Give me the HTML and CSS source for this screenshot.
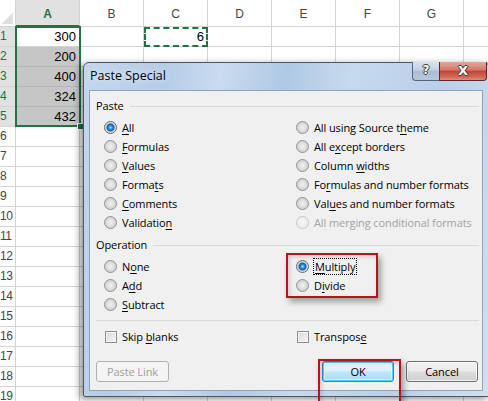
FILE: index.html
```html
<!DOCTYPE html>
<html>
<head>
<meta charset="utf-8">
<link rel="stylesheet" href="styles.css">
</head>
<body>
<div class="sheet">
  <div class="row hdr"><div class="corner"></div><div class="ch sel-h">A</div><div class="ch">B</div><div class="ch">C</div><div class="ch">D</div><div class="ch">E</div><div class="ch">F</div><div class="ch">G</div><div class="ch last"></div></div>
  <div class="row"><div class="rh on">1</div><div class="c num">300</div><div class="c"></div><div class="c num copy">6</div><div class="c"></div><div class="c"></div><div class="c"></div><div class="c"></div><div class="c last"></div></div>
  <div class="row"><div class="rh on">2</div><div class="c num shade">200</div><div class="c"></div><div class="c"></div><div class="c"></div><div class="c"></div><div class="c"></div><div class="c"></div><div class="c last"></div></div>
  <div class="row"><div class="rh on">3</div><div class="c num shade">400</div><div class="c"></div><div class="c"></div><div class="c"></div><div class="c"></div><div class="c"></div><div class="c"></div><div class="c last"></div></div>
  <div class="row"><div class="rh on">4</div><div class="c num shade">324</div><div class="c"></div><div class="c"></div><div class="c"></div><div class="c"></div><div class="c"></div><div class="c"></div><div class="c last"></div></div>
  <div class="row"><div class="rh on">5</div><div class="c num shade">432</div><div class="c"></div><div class="c"></div><div class="c"></div><div class="c"></div><div class="c"></div><div class="c"></div><div class="c last"></div></div>
  <div class="row"><div class="rh">6</div><div class="c"></div><div class="c"></div><div class="c"></div><div class="c"></div><div class="c"></div><div class="c"></div><div class="c"></div><div class="c last"></div></div>
  <div class="row"><div class="rh">7</div><div class="c"></div><div class="c"></div><div class="c"></div><div class="c"></div><div class="c"></div><div class="c"></div><div class="c"></div><div class="c last"></div></div>
  <div class="row"><div class="rh">8</div><div class="c"></div><div class="c"></div><div class="c"></div><div class="c"></div><div class="c"></div><div class="c"></div><div class="c"></div><div class="c last"></div></div>
  <div class="row"><div class="rh">9</div><div class="c"></div><div class="c"></div><div class="c"></div><div class="c"></div><div class="c"></div><div class="c"></div><div class="c"></div><div class="c last"></div></div>
  <div class="row"><div class="rh">10</div><div class="c"></div><div class="c"></div><div class="c"></div><div class="c"></div><div class="c"></div><div class="c"></div><div class="c"></div><div class="c last"></div></div>
  <div class="row"><div class="rh">11</div><div class="c"></div><div class="c"></div><div class="c"></div><div class="c"></div><div class="c"></div><div class="c"></div><div class="c"></div><div class="c last"></div></div>
  <div class="row"><div class="rh">12</div><div class="c"></div><div class="c"></div><div class="c"></div><div class="c"></div><div class="c"></div><div class="c"></div><div class="c"></div><div class="c last"></div></div>
  <div class="row"><div class="rh">13</div><div class="c"></div><div class="c"></div><div class="c"></div><div class="c"></div><div class="c"></div><div class="c"></div><div class="c"></div><div class="c last"></div></div>
  <div class="row"><div class="rh">14</div><div class="c"></div><div class="c"></div><div class="c"></div><div class="c"></div><div class="c"></div><div class="c"></div><div class="c"></div><div class="c last"></div></div>
  <div class="row"><div class="rh">15</div><div class="c"></div><div class="c"></div><div class="c"></div><div class="c"></div><div class="c"></div><div class="c"></div><div class="c"></div><div class="c last"></div></div>
  <div class="row"><div class="rh">16</div><div class="c"></div><div class="c"></div><div class="c"></div><div class="c"></div><div class="c"></div><div class="c"></div><div class="c"></div><div class="c last"></div></div>
  <div class="row"><div class="rh">17</div><div class="c"></div><div class="c"></div><div class="c"></div><div class="c"></div><div class="c"></div><div class="c"></div><div class="c"></div><div class="c last"></div></div>
  <div class="row"><div class="rh">18</div><div class="c"></div><div class="c"></div><div class="c"></div><div class="c"></div><div class="c"></div><div class="c"></div><div class="c"></div><div class="c last"></div></div>
  <div class="row"><div class="rh">19</div><div class="c"></div><div class="c"></div><div class="c"></div><div class="c"></div><div class="c"></div><div class="c"></div><div class="c"></div><div class="c last"></div></div>
</div>
<div class="selection"><div class="handle"></div></div>

<div class="dialog">
  <div class="titlebar">
    <div class="title">Paste Special</div>
    <div class="caption-btns">
      <div class="cbtn help">?</div>
      <div class="cbtn close">X</div>
    </div>
  </div>
  <div class="content">
    <div class="group-label">Paste</div>
    <div class="options paste-opts">
      <div class="opt"><span class="radio on"></span><span><u>A</u>ll</span></div>
      <div class="opt"><span class="radio"></span><span>All using Source t<u>h</u>eme</span></div>
      <div class="opt"><span class="radio"></span><span><u>F</u>ormulas</span></div>
      <div class="opt"><span class="radio"></span><span>All e<u>x</u>cept borders</span></div>
      <div class="opt"><span class="radio"></span><span><u>V</u>alues</span></div>
      <div class="opt"><span class="radio"></span><span>Column <u>w</u>idths</span></div>
      <div class="opt"><span class="radio"></span><span>Forma<u>t</u>s</span></div>
      <div class="opt"><span class="radio"></span><span>Fo<u>r</u>mulas and number formats</span></div>
      <div class="opt"><span class="radio"></span><span><u>C</u>omments</span></div>
      <div class="opt"><span class="radio"></span><span>Val<u>u</u>es and number formats</span></div>
      <div class="opt"><span class="radio"></span><span>Validatio<u>n</u></span></div>
      <div class="opt disabled"><span class="radio"></span><span>All merging conditional formats</span></div>
    </div>
    <div class="group-label op-label">Operation</div>
    <div class="options op-opts">
      <div class="opt"><span class="radio"></span><span>N<u>o</u>ne</span></div>
      <div class="opt"><span class="radio on"></span><span class="focus"><u>M</u>ultiply</span></div>
      <div class="opt"><span class="radio"></span><span>A<u>d</u>d</span></div>
      <div class="opt"><span class="radio"></span><span>D<u>i</u>vide</span></div>
      <div class="opt"><span class="radio"></span><span><u>S</u>ubtract</span></div>
    </div>
    <div class="separator"></div>
    <div class="options checks">
      <div class="opt"><span class="check"></span><span>Skip <u>b</u>lanks</span></div>
      <div class="opt"><span class="check"></span><span>Transpos<u>e</u></span></div>
    </div>
    <div class="buttons">
      <div class="btn disabled-btn">Paste Link</div>
      <div class="btn default">OK</div>
      <div class="btn">Cancel</div>
    </div>
  </div>
</div>

<div class="mark mark-op"></div>
<div class="mark mark-ok"></div>
</body>
</html>
```

FILE: styles.css
```css
* { box-sizing: border-box; }
body {
  margin: 0;
  width: 488px;
  height: 401px;
  overflow: hidden;
  position: relative;
  background: #fff;
  font-family: "Liberation Sans", Arial, sans-serif;
}

/* ---------- spreadsheet ---------- */
.sheet { display: flex; flex-direction: column; }
.row { display: flex; height: 20px; }
.row.hdr { height: 27px; }
.row > div {
  border-right: 1px solid #d4d4d4;
  border-bottom: 1px solid #d4d4d4;
  flex: none;
}
.corner, .rh { width: 16px; }
.ch, .c { width: 64px; }
.row > .last { flex: 1; border-right: none; }

.corner { position: relative; background: #fff; }
.corner::after {
  content: "";
  position: absolute;
  right: 2px; bottom: 2px;
  width: 11px; height: 11px;
  background: linear-gradient(135deg, transparent 50%, #dfdfdf 50%);
}
.ch {
  background: #fff;
  color: #444;
  font-size: 12px;
  text-align: center;
  line-height: 23px;
  padding-top: 3px;
}
.ch.sel-h {
  background: #e1e1e1;
  color: #217346;
  font-weight: bold;
  border-bottom: 2px solid #217346;
  line-height: 22px;
}
.rh {
  color: #444;
  font-size: 12px;
  line-height: 19px;
  padding-left: 0;
  white-space: nowrap;
  letter-spacing: -0.5px;
}
.rh.on { background: #e1e1e1; color: #217346; }

.c { font-size: 13px; line-height: 19px; color: #000; }
.c.num { text-align: right; padding-right: 3px; }
.c.shade { background: #c6c6c6; border-bottom-color: #b5b5b5; }
.c.copy { position: relative; }
.c.copy::after {
  content: "";
  position: absolute;
  left: 0; top: 0; right: -1px; bottom: -1px;
  border: 2px dashed #217346;
}

.selection {
  position: absolute;
  left: 15px; top: 26px;
  width: 66px; height: 101px;
  border: 2px solid #217346;
}
.handle {
  position: absolute;
  right: -5px; bottom: -5px;
  width: 7px; height: 7px;
  background: #217346;
  border: 1px solid #fff;
}

/* ---------- dialog ---------- */
.dialog {
  position: absolute;
  left: 83px; top: 62px;
  width: 407px; height: 335px;
  border: 1px solid #4f5864;
  border-radius: 6px 6px 2px 2px;
  background: linear-gradient(100deg, #c3d7ed 0%, #b6cde7 18%, #c9dcf0 30%, #afc8e3 44%, #c6daee 58%, #b9d0e9 78%, #cfe0f2 100%);
  box-shadow: -3px 2px 7px rgba(0,0,0,.45);
  display: flex;
  flex-direction: column;
  font-family: "Open Sans", "Noto Sans", sans-serif;
  font-size: 11px;
  letter-spacing: -0.1px;
  color: #000;
}
.titlebar {
  height: 27px;
  display: flex;
  align-items: flex-start;
}
.title {
  flex: 1;
  padding: 5px 0 0 6px;
  font-size: 12.5px;
  letter-spacing: 0;
  line-height: 16px;
  color: #000;
  text-shadow: 0 0 6px rgba(255,255,255,.9);
}
.caption-btns {
  display: flex;
  margin-top: -1px;
  margin-right: 2px;
}
.cbtn {
  height: 19px;
  border: 1px solid #56657a;
  border-top: none;
  color: #fff;
  font-family: "DejaVu Sans", sans-serif;
  font-weight: bold;
  text-align: center;
  line-height: 17px;
  letter-spacing: 0;
  text-shadow: 1px 0 0 #3a3a3a, -1px 0 0 #3a3a3a, 0 1px 0 #3a3a3a, 0 -1px 0 #3a3a3a;
}
.help {
  width: 27px;
  border-right: none;
  border-radius: 0 0 0 4px;
  background: linear-gradient(#d7e2ef, #c2d2e4 45%, #a9bdd3 50%, #b6c8dc);
  font-size: 12px;
}
.close {
  width: 48px;
  border-color: #5c2a26;
  border-radius: 0 0 4px 0;
  background: linear-gradient(#e7a797, #d4786a 45%, #c24537 50%, #d16a58 85%, #e08f7c);
  font-size: 13px;
}

.content {
  flex: 1;
  margin: 0 6px 5px 5px;
  background: #f0f0f0;
  border: 1px solid #8fa3ba;
  padding: 7px 3px 8px 6px;
  display: flex;
  flex-direction: column;
}
.group-label {
  display: flex;
  align-items: center;
  gap: 6px;
  height: 16px;
  line-height: 16px;
}
.group-label::after {
  content: "";
  flex: 1;
  border-top: 1px solid #d8d8d8;
  margin-top: 1px;
}
.op-label { margin-top: 5px; }

.options {
  display: grid;
  grid-template-columns: 192px 1fr;
  grid-auto-rows: 19px;
  padding-left: 8px;
}
.paste-opts { margin-top: 4px; }
.op-opts { margin-top: 4px; }
.opt {
  display: flex;
  align-items: center;
  gap: 5px;
  white-space: nowrap;
}
.opt u { text-decoration-thickness: 1px; text-underline-offset: 2px; }
.opt.disabled { color: #a3a3a3; }

.radio {
  width: 13px; height: 13px;
  flex: none;
  border-radius: 50%;
  border: 1px solid #8d8f91;
  background: radial-gradient(circle, #f1f1f1 0, #e2e2e2 3px, #d3d3d3 5px, #ececec 6px);
}
.radio.on {
  border-color: #5f6a75;
  background: radial-gradient(circle, #a8dcff 0, #2e86d8 2px, #1b5fa6 3.5px, #d0d4d8 4.5px, #e8e8e8 6px);
}
.disabled .radio {
  border-color: #c8c8c8;
  background: radial-gradient(circle, #f6f6f6 0, #ececec 6px);
}
.focus { outline: 1px dotted #000; outline-offset: 0; padding: 0 1px; }

.separator {
  margin-top: 6px;
  border-top: 1px solid #d8d8d8;
}
.checks { margin-top: 6px; }
.check {
  width: 12px; height: 12px;
  flex: none;
  margin-left: 1px;
  border: 1px solid #8f8f8f;
  background: linear-gradient(135deg, #d9d9d9, #f7f7f7);
  box-shadow: inset 0 0 0 1px #f4f4f4;
}

.buttons {
  display: flex;
  margin-top: 15px;
  margin-right: 1px;
  gap: 12px;
}
.btn {
  height: 21px;
  width: 72px;
  border: 1px solid #707070;
  border-radius: 3px;
  background: linear-gradient(#f2f2f2, #ebebeb 48%, #dddddd 52%, #cfcfcf);
  box-shadow: inset 0 0 0 1px rgba(255,255,255,.7);
  text-align: center;
  line-height: 19px;
}
.btn.disabled-btn {
  width: 73px;
  border-color: #adb2b5;
  background: #f4f4f4;
  color: #a0a0a0;
  box-shadow: none;
}
.btn.default {
  margin-left: auto;
  border-color: #3c7fb1;
  box-shadow: inset 0 0 0 1px #5fd0f5, inset 0 0 0 2px rgba(255,255,255,.5);
  background: linear-gradient(#eaf6fd, #d9f0fc 48%, #bee6fd 52%, #a7d9f5);
}

/* ---------- red annotation boxes ---------- */
.mark {
  position: absolute;
  border: 2px solid #b8141c;
  box-shadow: 3px 4px 6px rgba(0,0,0,.35), inset 2px 2px 4px rgba(0,0,0,.15);
}
.mark-op { left: 286px; top: 253px; width: 92px; height: 45px; }
.mark-ok { left: 318px; top: 359px; width: 83px; height: 50px; }
```
